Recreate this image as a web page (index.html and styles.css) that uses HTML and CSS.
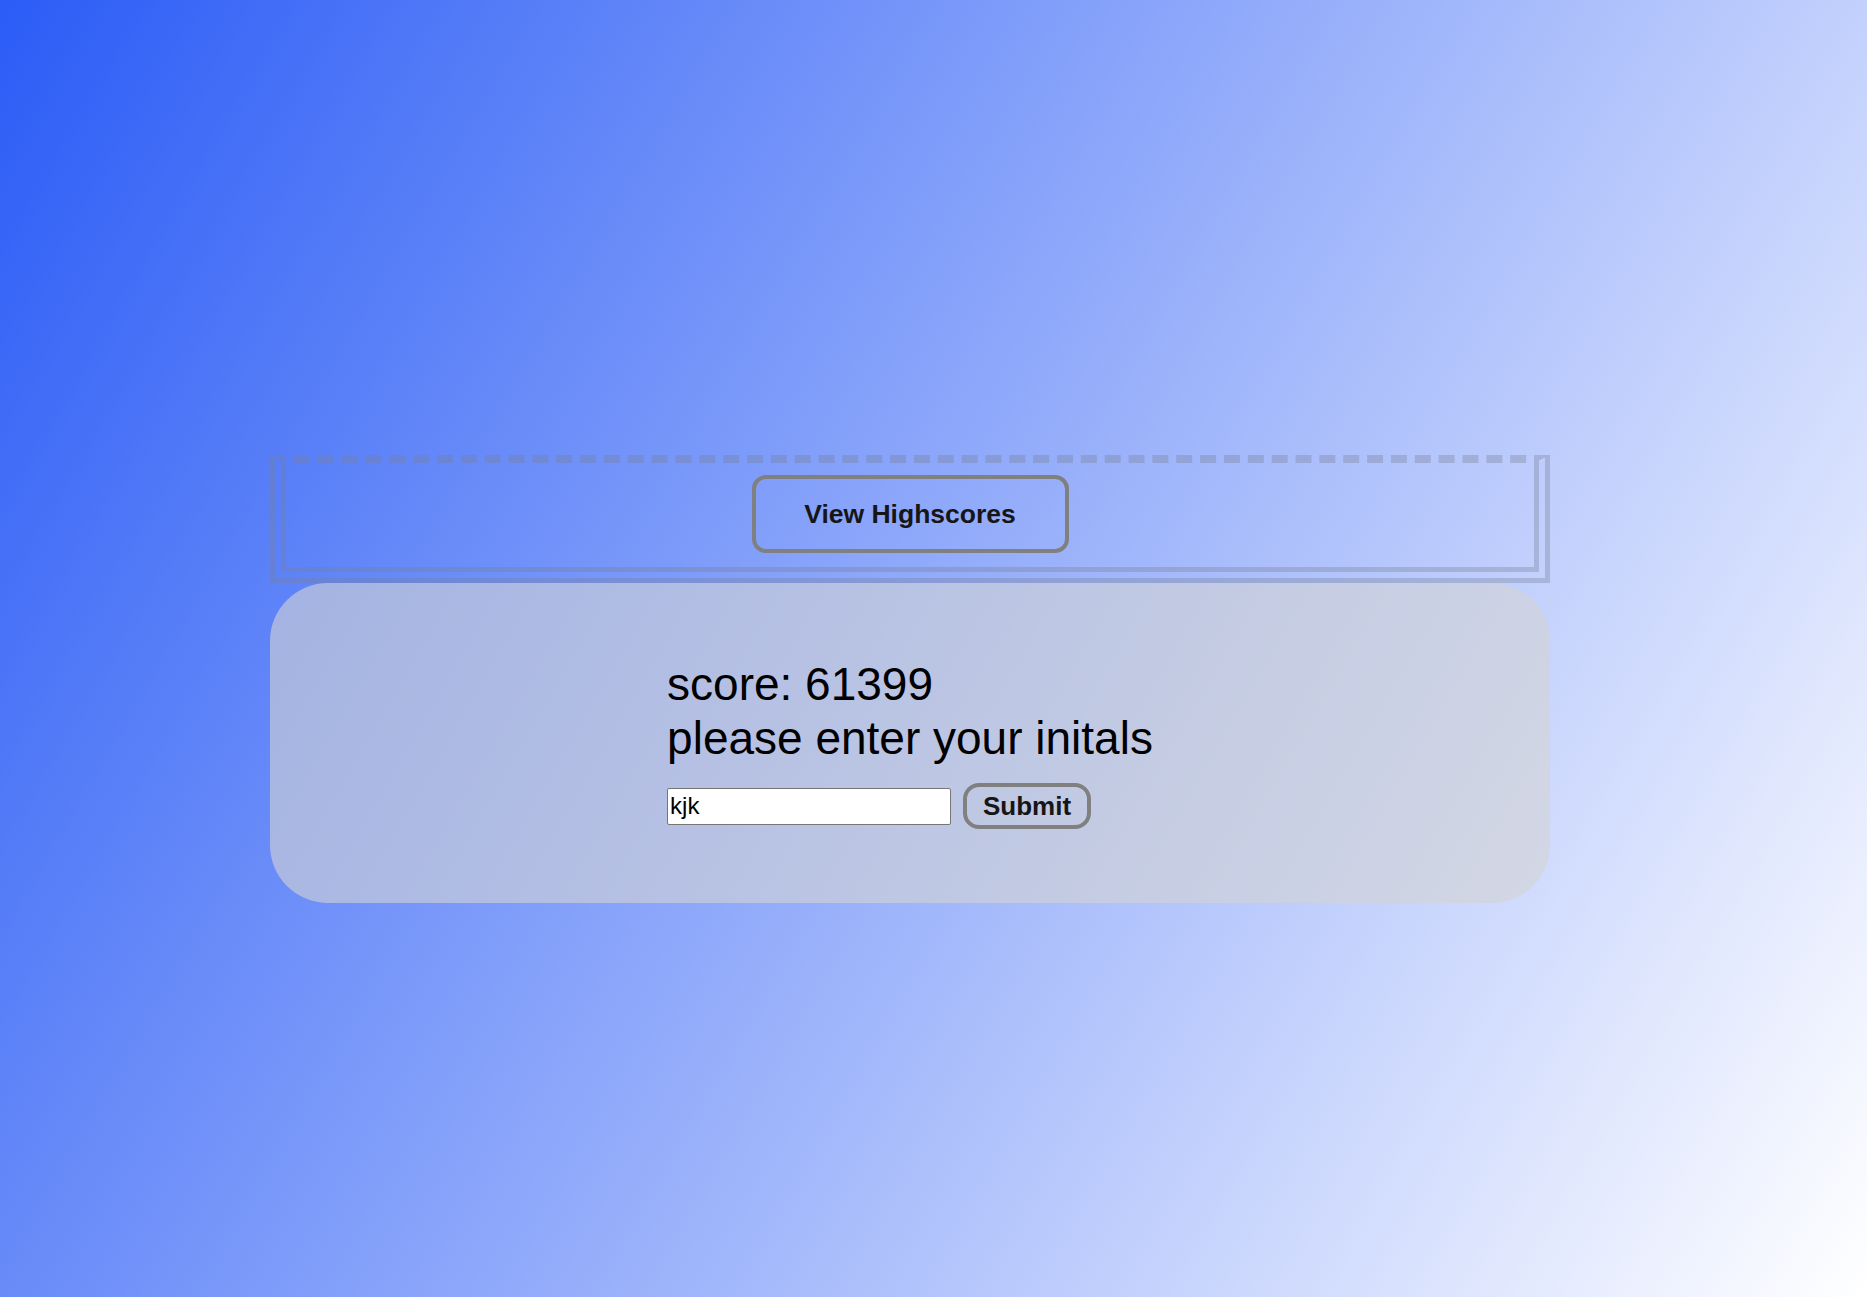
FILE: index.html
```html
<!DOCTYPE html>
<html lang="en">
<head>
<meta charset="utf-8">
<title>Quiz</title>
<link rel="stylesheet" href="styles.css">
</head>
<body>
<main class="wrap">
  <header class="top-bar">
    <button class="btn btn-highscores" type="button">View Highscores</button>
  </header>
  <section class="card">
    <div class="card-content">
      <p class="line">score: 61399</p>
      <p class="line">please enter your initals</p>
      <form class="entry">
        <input class="initials" type="text" value="kjk">
        <button class="btn btn-submit" type="button">Submit</button>
      </form>
    </div>
  </section>
</main>
</body>
</html>
```
FILE: styles.css
```css
html, body {
  margin: 0;
  padding: 0;
  height: 100%;
}
body {
  background: linear-gradient(120deg, #2b5cf6 0%, #ffffff 100%);
  font-family: "Liberation Sans", Arial, sans-serif;
  color: #000;
}
.wrap {
  width: 1280px;
  margin-left: 270px;
  padding-top: 455px;
}
.top-bar {
  display: flex;
  justify-content: center;
  align-items: center;
  border-style: dashed double double double;
  border-width: 8px 16px 16px 16px;
  border-color: rgba(120, 128, 150, 0.35);
  padding: 12px 0 14px;
  box-sizing: border-box;
  height: 128px;
}
.btn {
  font-family: "Liberation Sans", Arial, sans-serif;
  font-weight: bold;
  font-size: 26px;
  line-height: 30px;
  color: #161616;
  background: transparent;
  border: 4px solid #808080;
  cursor: pointer;
}
.btn-highscores {
  width: 317px;
  height: 78px;
  border-radius: 14px;
  padding: 0;
  font-size: 26.5px;
}
.card {
  height: 320px;
  border-radius: 58px;
  background: rgba(211, 211, 211, 0.6);
  display: flex;
  justify-content: center;
  align-items: center;
}
.card-content {
  display: flex;
  flex-direction: column;
  align-items: flex-start;
}
.line {
  margin: 0;
  font-size: 46px;
  line-height: 54px;
}
.entry {
  display: flex;
  align-items: center;
  gap: 12px;
  margin-top: 18px;
}
.initials {
  width: 284px;
  height: 37px;
  box-sizing: border-box;
  font-family: "Liberation Sans", Arial, sans-serif;
  font-size: 24px;
  padding: 0 2px;
  border: 1px solid #767676;
  border-radius: 2px;
  background: #fff;
  color: #000;
}
.btn-submit {
  width: 128px;
  height: 46px;
  padding: 0;
  border-radius: 16px;
}
```
